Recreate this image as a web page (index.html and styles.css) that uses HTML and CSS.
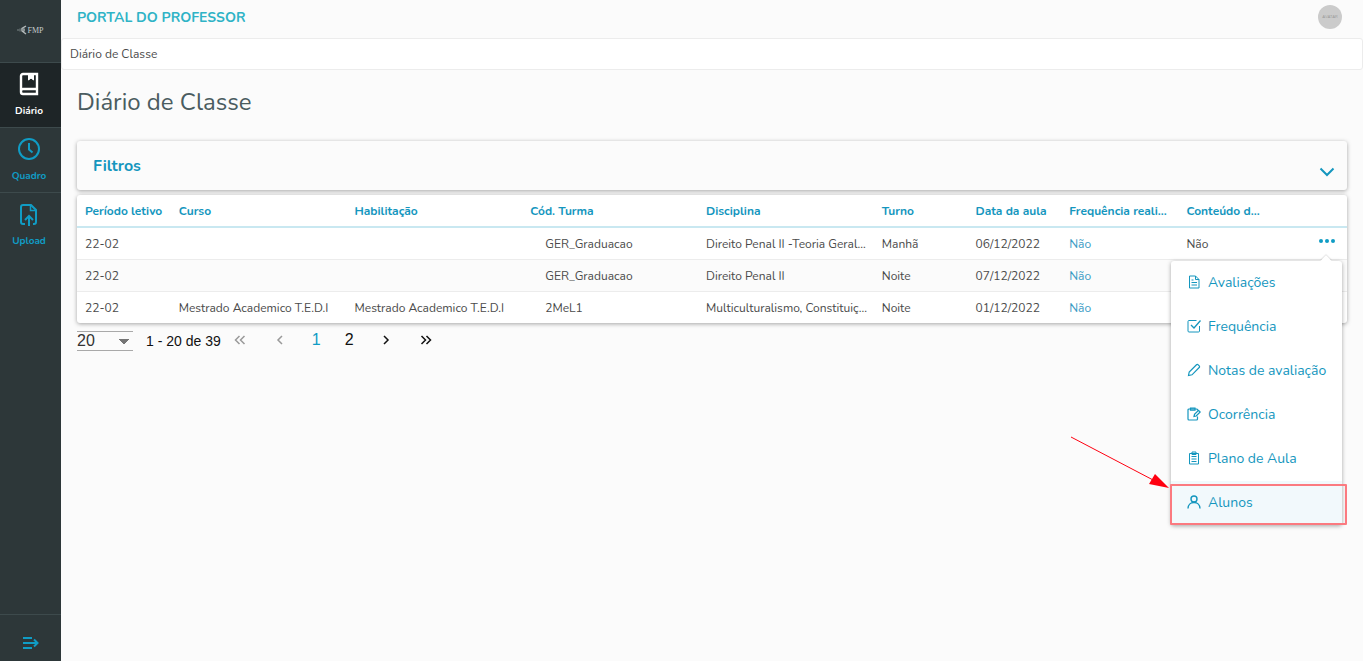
FILE: index.html
```html
<!DOCTYPE html>
<html lang="pt-BR">
<head>
    <meta charset="UTF-8">
    <meta name="viewport" content="width=device-width, initial-scale=1.0">
    <title>Portal do Professor</title>
    <link rel="stylesheet" href="styles.css">
</head>
<body>
    <nav class="sidebar">
        <a class="logo" href="#">
            <svg width="10" height="10" viewBox="0 0 10 10" fill="none" stroke="#b5bbbc">
                <path d="M9 1L5 3.5V6L9 9M7 3.5v3" stroke-width="1.4"/>
                <path d="M0 5h2M3 3.500v3" stroke="#7c8788"/>
            </svg>
            <span>FMP</span>
        </a>
        <a class="nav-item active" href="#">
            <svg width="24" height="24" viewBox="0 0 24 24" fill="none" stroke="currentColor" stroke-width="2">
                <path d="M20 17V2H6a2 2 0 0 0-2 2v16a2 2 0 0 0 2 2h14v-5H6a2 2 0 0 0-2 2" stroke-width="2.400"/>
                <path d="M11.500 2v6l2.500-2 2.500 2V2" fill="currentColor" stroke-width="1"/>
            </svg>
            <span>Diário</span>
        </a>
        <a class="nav-item" href="#">
            <svg width="24" height="24" viewBox="0 0 24 24" fill="none" stroke="currentColor" stroke-width="2">
                <circle cx="12" cy="12" r="10"/>
                <path d="M12 6v6.500l3.500 3"/>
            </svg>
            <span>Quadro</span>
        </a>
        <a class="nav-item" href="#">
            <svg width="24" height="24" viewBox="0 0 24 24" fill="none" stroke="currentColor" stroke-width="2">
                <path d="M8 22H6a2 2 0 0 1-2-2V5a2 2 0 0 1 2-2h8l5 5v12a2 2 0 0 1-2 2h-1"/>
                <path d="M13.500 3.500V8.500H19" stroke-width="1.500"/>
                <path d="M12 24V14M8 18l4-4 4 4"/>
            </svg>
            <span>Upload</span>
        </a>
        <button class="expand" type="button" aria-label="Expandir menu">
            <svg width="16" height="14" viewBox="0 0 16 14" fill="none" stroke="currentColor" stroke-width="2">
                <path d="M0 2h9M0 7h15M0 12h9M11 3.500L14.500 7 11 10.500"/>
            </svg>
        </button>
    </nav>

    <div class="page">
        <header class="topbar">
            <span class="portal">PORTAL DO PROFESSOR</span>
            <span class="avatar">AVATAR</span>
        </header>
        <div class="breadcrumb">Diário de Classe</div>

        <main class="content">
            <h1>Diário de Classe</h1>

            <button class="filters" type="button">
                <span>Filtros</span>
                <svg width="16" height="10" viewBox="0 0 16 10" fill="none" stroke="currentColor" stroke-width="2">
                    <path d="M1.500 1.500L8 8l6.500-6.500"/>
                </svg>
            </button>

            <div class="table-card">
                <table>
                    <colgroup>
                        <col class="col-s"><col class="col-l"><col class="col-l"><col class="col-l"><col class="col-l">
                        <col class="col-s"><col class="col-s"><col class="col-m"><col class="col-s"><col>
                    </colgroup>
                    <thead>
                        <tr>
                            <th>Período letivo</th>
                            <th>Curso</th>
                            <th>Habilitação</th>
                            <th>Cód. Turma</th>
                            <th>Disciplina</th>
                            <th>Turno</th>
                            <th>Data da aula</th>
                            <th>Frequência reali...</th>
                            <th>Conteúdo d...</th>
                            <th></th>
                        </tr>
                    </thead>
                    <tbody>
                        <tr>
                            <td>22-02</td>
                            <td></td>
                            <td></td>
                            <td class="turma">GER_Graduacao</td>
                            <td>Direito Penal II -Teoria Geral...</td>
                            <td>Manhã</td>
                            <td>06/12/2022</td>
                            <td><a href="#">Não</a></td>
                            <td>Não</td>
                            <td class="actions">
                                <button class="more" type="button" aria-label="Ações"><i></i><i></i><i></i></button>
                            </td>
                        </tr>
                        <tr>
                            <td>22-02</td>
                            <td></td>
                            <td></td>
                            <td class="turma">GER_Graduacao</td>
                            <td>Direito Penal II</td>
                            <td>Noite</td>
                            <td>07/12/2022</td>
                            <td><a href="#">Não</a></td>
                            <td></td>
                            <td></td>
                        </tr>
                        <tr>
                            <td>22-02</td>
                            <td>Mestrado Academico T.E.D.I</td>
                            <td>Mestrado Academico T.E.D.I</td>
                            <td class="turma">2MeL1</td>
                            <td>Multiculturalismo, Constituiç...</td>
                            <td>Noite</td>
                            <td>01/12/2022</td>
                            <td><a href="#">Não</a></td>
                            <td></td>
                            <td></td>
                        </tr>
                    </tbody>
                </table>

                <div class="menu">
                    <a href="#">
                        <svg width="14" height="14" viewBox="0 0 14 14" fill="none" stroke="currentColor">
                            <path d="M2.500 1h6L12 4.500V13H2.500zM8.500 1v3.500H12M4.500 5h2M4.500 7.500h5.500M4.500 10h5.500"/>
                        </svg>
                        Avaliações
                    </a>
                    <a href="#">
                        <svg width="14" height="14" viewBox="0 0 14 14" fill="none" stroke="currentColor">
                            <path d="M9.500 1.500H2a1 1 0 0 0-1 1V12a1 1 0 0 0 1 1h9.500a1 1 0 0 0 1-1V7"/>
                            <path d="M4 6l3 3 6.500-7.500" stroke-width="1.300"/>
                        </svg>
                        Frequência
                    </a>
                    <a href="#">
                        <svg width="14" height="14" viewBox="0 0 14 14" fill="none" stroke="currentColor" stroke-width="1.200">
                            <path d="M1.500 12.500l.7-3.500 7.300-7.200a1.200 1.200 0 0 1 1.700 0l1 1a1.200 1.200 0 0 1 0 1.700L5 11.800z"/>
                        </svg>
                        Notas de avaliação
                    </a>
                    <a href="#">
                        <svg width="14" height="14" viewBox="0 0 14 14" fill="none" stroke="currentColor" stroke-width="1.200">
                            <path d="M10.500 3.500V3a1 1 0 0 0-1-1H2a1 1 0 0 0-1 1v9a1 1 0 0 0 1 1h7.500a1 1 0 0 0 1-1V9.500"/>
                            <path d="M3.500 1.200h4.500v2H3.500zM7 9.500l.5-2.200 4-4 1.700 1.700-4 4z"/>
                        </svg>
                        Ocorrência
                    </a>
                    <a href="#">
                        <svg width="14" height="14" viewBox="0 0 14 14" fill="none" stroke="currentColor">
                            <path d="M2.500 2.500h9V13h-9zM5 1h4v2.500H5zM4.500 5.500h5M4.500 8h5M4.500 10.500h5"/>
                        </svg>
                        Plano de Aula
                    </a>
                    <a class="selected" href="#">
                        <svg width="14" height="14" viewBox="0 0 14 14" fill="none" stroke="currentColor" stroke-width="1.400">
                            <circle cx="7" cy="4" r="3"/>
                            <path d="M1 13.500c0-3.500 2.500-6 6-6s6 2.500 6 6"/>
                        </svg>
                        Alunos
                        <span class="highlight"></span>
                        <svg class="arrow" width="100" height="54" viewBox="0 0 100 54">
                            <path d="M1 1l84 44" stroke="#ff0010"/>
                            <path d="M99 52L79 48l6-10z" fill="#ff0010"/>
                        </svg>
                    </a>
                </div>
            </div>

            <div class="pager">
                <select aria-label="Itens por página">
                    <option>20</option>
                </select>
                <span class="range">1 - 20 de 39</span>
                <div class="pages">
                    <button class="step" type="button" aria-label="Primeira" disabled>
                        <svg width="12" height="10" viewBox="0 0 12 10" fill="none" stroke="currentColor" stroke-width="1.500"><path d="M5.500 1l-4 4 4 4M10.500 1l-4 4 4 4"/></svg>
                    </button>
                    <button class="step" type="button" aria-label="Anterior" disabled>
                        <svg width="12" height="10" viewBox="0 0 12 10" fill="none" stroke="currentColor" stroke-width="1.500"><path d="M8 1L4 5l4 4"/></svg>
                    </button>
                    <button class="current" type="button">1</button>
                    <button type="button">2</button>
                    <button class="step" type="button" aria-label="Próxima">
                        <svg width="12" height="10" viewBox="0 0 12 10" fill="none" stroke="currentColor" stroke-width="1.500"><path d="M4 1l4 4-4 4"/></svg>
                    </button>
                    <button class="step" type="button" aria-label="Última">
                        <svg width="12" height="10" viewBox="0 0 12 10" fill="none" stroke="currentColor" stroke-width="1.500"><path d="M1.500 1l4 4-4 4M6.500 1l4 4-4 4"/></svg>
                    </button>
                </div>
            </div>
        </main>
    </div>
</body>
</html>
```
FILE: styles.css
```css
* {
    box-sizing: border-box;
}

body {
    margin: 0;
    display: flex;
    min-height: 100vh;
    background-color: #fbfbfb;
    color: #4a4a4a;
    font-family: Nunito, "Nunito Sans", "Open Sans", sans-serif;
    font-size: 12px;
}

a {
    color: #3a9bc4;
    text-decoration: none;
}

button {
    border: none;
    background: none;
    padding: 0;
    font-family: inherit;
    color: inherit;
    cursor: pointer;
}

svg {
    flex: none;
}

/* Sidebar */
.sidebar {
    width: 61px;
    flex: none;
    display: flex;
    flex-direction: column;
    background-color: #2d3739;
    color: #109cc5;
}

.logo {
    height: 63px;
    display: flex;
    align-items: center;
    justify-content: center;
    padding-bottom: 2px;
    border-bottom: 1px solid #3d4a4c;
    font-family: "Liberation Serif", serif;
    font-size: 8px;
    color: #c5cbcc;
}

.nav-item {
    height: 65px;
    display: flex;
    flex-direction: column;
    align-items: center;
    gap: 8px;
    padding: 9px 3px 0 0;
    border-bottom: 1px solid #3d4a4c;
    font-size: 10px;
    line-height: 14px;
    font-weight: 700;
    color: #109cc5;
}

.nav-item:nth-child(4) {
    border-bottom: none;
}

.nav-item.active {
    background-color: #1e2527;
    color: #ffffff;
}

.expand {
    height: 47px;
    margin-top: auto;
    padding-top: 14px;
    border-top: 1px solid #3d4a4c;
}

/* Page */
.page {
    flex: 1;
    min-width: 0;
}

.topbar {
    height: 38px;
    display: flex;
    justify-content: space-between;
    padding: 5px 21px 0 16px;
}

.portal {
    font-size: 14px;
    line-height: 26px;
    font-weight: 700;
    color: #2fb3c6;
}

.avatar {
    width: 24px;
    height: 24px;
    border-radius: 50%;
    background-color: #cbcbcb;
    color: #999999;
    font-size: 4px;
    line-height: 24px;
    text-align: center;
}

.breadcrumb {
    height: 32px;
    padding-left: 8px;
    border: 1px solid #ececec;
    border-radius: 3px;
    background-color: #ffffff;
    line-height: 30px;
}

.content {
    padding: 16px 16px 0;
}

h1 {
    margin: 0 0 23px;
    font-size: 24px;
    line-height: 32px;
    font-weight: 400;
    color: #4a5c60;
}

.filters {
    width: 100%;
    height: 49px;
    display: flex;
    justify-content: space-between;
    align-items: center;
    padding: 0 12px 0 16px;
    border-radius: 3px;
    background-color: #fbfbfb;
    box-shadow: 0 1px 4px rgba(0, 0, 0, 0.35);
    font-size: 16px;
    font-weight: 700;
    color: #1496be;
}

.filters svg {
    margin-top: 12px;
}

/* Table */
.table-card {
    position: relative;
    margin-top: 5px;
    border-radius: 3px;
    background-color: #ffffff;
    box-shadow: 0 1px 4px rgba(0, 0, 0, 0.35);
}

table {
    width: 100%;
    table-layout: fixed;
    border-spacing: 0;
}

.col-s {
    width: 7.38%;
}

.col-m {
    width: 9.23%;
}

.col-l {
    width: 13.84%;
}

th {
    height: 33px;
    padding: 0 8px;
    border-bottom: 2px solid #c9e8f1;
    text-align: left;
    font-weight: 700;
    color: #1496be;
    white-space: nowrap;
}

td {
    height: 32px;
    padding: 0 8px;
    border-bottom: 1px solid #ececec;
    white-space: nowrap;
}

tr:last-child td {
    height: 31px;
    border-bottom: none;
}

tbody tr:nth-child(even) {
    background-color: #fbfbfb;
}

td.turma {
    padding-left: 23px;
}

td.actions {
    padding-right: 12px;
    text-align: right;
}

.more {
    display: inline-flex;
    gap: 2px;
    padding-bottom: 8px;
    vertical-align: middle;
}

.more i {
    width: 4px;
    height: 4px;
    border-radius: 50%;
    background-color: #109cc5;
}

/* Actions menu */
.menu {
    position: absolute;
    top: 66px;
    right: 5px;
    width: 171px;
    border-radius: 3px;
    background-color: #ffffff;
    box-shadow: 0 1px 4px rgba(0, 0, 0, 0.35);
}

.menu::before {
    content: "";
    position: absolute;
    top: -4px;
    right: 12px;
    width: 8px;
    height: 8px;
    background-color: #ffffff;
    box-shadow: -1px -1px 1px rgba(0, 0, 0, 0.1);
    transform: rotate(45deg);
}

.menu a {
    position: relative;
    height: 44px;
    display: flex;
    align-items: center;
    gap: 7px;
    padding: 0 16px 2px;
    font-size: 14px;
    color: #1496be;
    white-space: nowrap;
}

.menu .selected {
    background-color: #f2f9fc;
}

.highlight {
    position: absolute;
    top: 3px;
    right: -5px;
    bottom: 0;
    left: -1px;
    border: 2px solid #fb7a80;
    border-radius: 1px;
}

.arrow {
    position: absolute;
    right: 172px;
    bottom: 35px;
}

/* Pager */
.pager {
    display: flex;
    margin-top: 8px;
    font-family: "Liberation Sans", Arial, sans-serif;
    color: #111111;
}

.pager select {
    width: 56px;
    height: 20px;
    appearance: none;
    border: solid #a9a9a9;
    border-width: 1px 0;
    border-radius: 0;
    padding: 0;
    background: linear-gradient(to bottom left, #757575 50%, transparent 51%) 42px 7px / 5px 5px no-repeat,
        linear-gradient(to bottom right, #757575 50%, transparent 51%) 47px 7px / 5px 5px no-repeat;
    font-family: inherit;
    font-size: 16px;
    line-height: 18px;
    color: #333333;
}

.range {
    margin-left: 13px;
    font-size: 14px;
    line-height: 20px;
}

.pages {
    display: flex;
    margin-left: -1px;
}

.pages button {
    width: 33px;
    height: 18px;
    font-size: 16px;
    line-height: 18px;
}

.pages .step {
    width: 40px;
}

.pages button:disabled {
    color: #999999;
}

.pages .current {
    color: #109cc5;
}
```
